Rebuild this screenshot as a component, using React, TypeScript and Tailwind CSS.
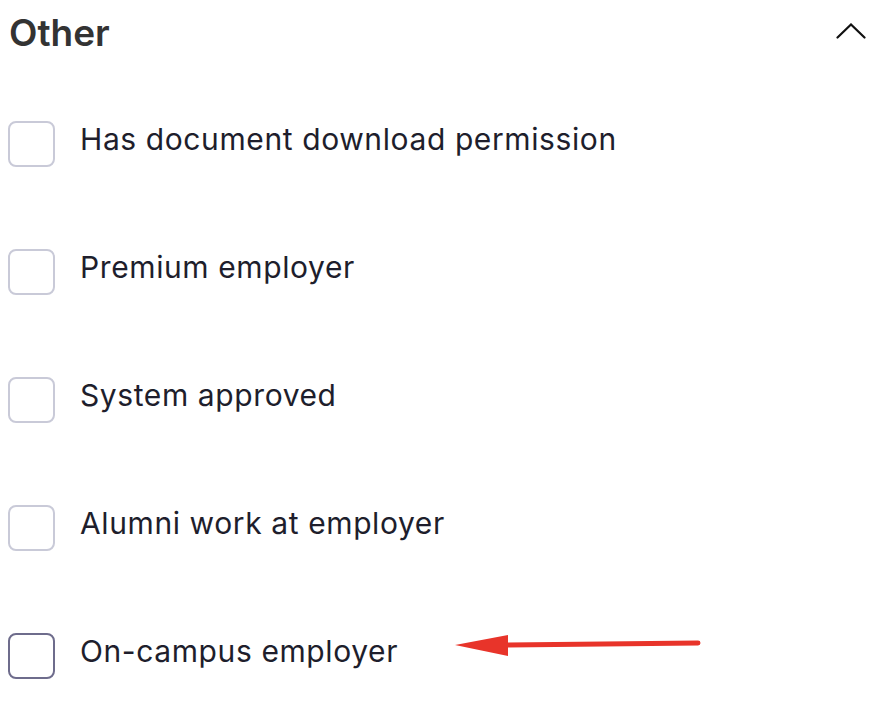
import React from "react";

const items = [
  { label: "Has document download permission", dark: false },
  { label: "Premium employer", dark: false },
  { label: "System approved", dark: false },
  { label: "Alumni work at employer", dark: false },
  { label: "On-campus employer", dark: true },
];

export default function App() {
  return (
    <div className="w-[888px] h-[704px] bg-white relative overflow-hidden" style={{ fontFamily: "Inter, 'Noto Sans', sans-serif" }}>
      <div className="flex items-center justify-between pl-[9px] pr-[22px] pt-[3px] h-[62px]">
        <h2 className="text-[37px] font-semibold text-[#333333] leading-none">Other</h2>
        <svg width="30" height="16" viewBox="0 0 30 16" className="mb-[4px]">
          <path d="M1.5 14.5 L15 1.5 L28.5 14.5" fill="none" stroke="#111" strokeWidth="2.2" strokeLinecap="round" strokeLinejoin="miter" />
        </svg>
      </div>
      <div className="flex flex-col pt-[59px] gap-[82px] pl-[8px]">
        {items.map((it) => (
          <div key={it.label} className="flex items-center h-[46px]">
            <div
              className={
                "w-[47px] h-[46px] rounded-[8px] border-2 shrink-0 " +
                (it.dark ? "border-[#6e6c8c]" : "border-[#c9cad8]")
              }
            />
            <span className="ml-[25px] mb-[11px] text-[30px] tracking-[0.6px] text-[#1e1e2c] leading-none">{it.label}</span>
          </div>
        ))}
      </div>
      <svg className="absolute left-[450px] top-[630px]" width="260" height="30" viewBox="0 0 260 30">
        <line x1="55" y1="15" x2="248" y2="13" stroke="#e8342a" strokeWidth="5" strokeLinecap="round" />
        <polygon points="5,15 58,5 58,26" fill="#e8342a" />
      </svg>
    </div>
  );
}
